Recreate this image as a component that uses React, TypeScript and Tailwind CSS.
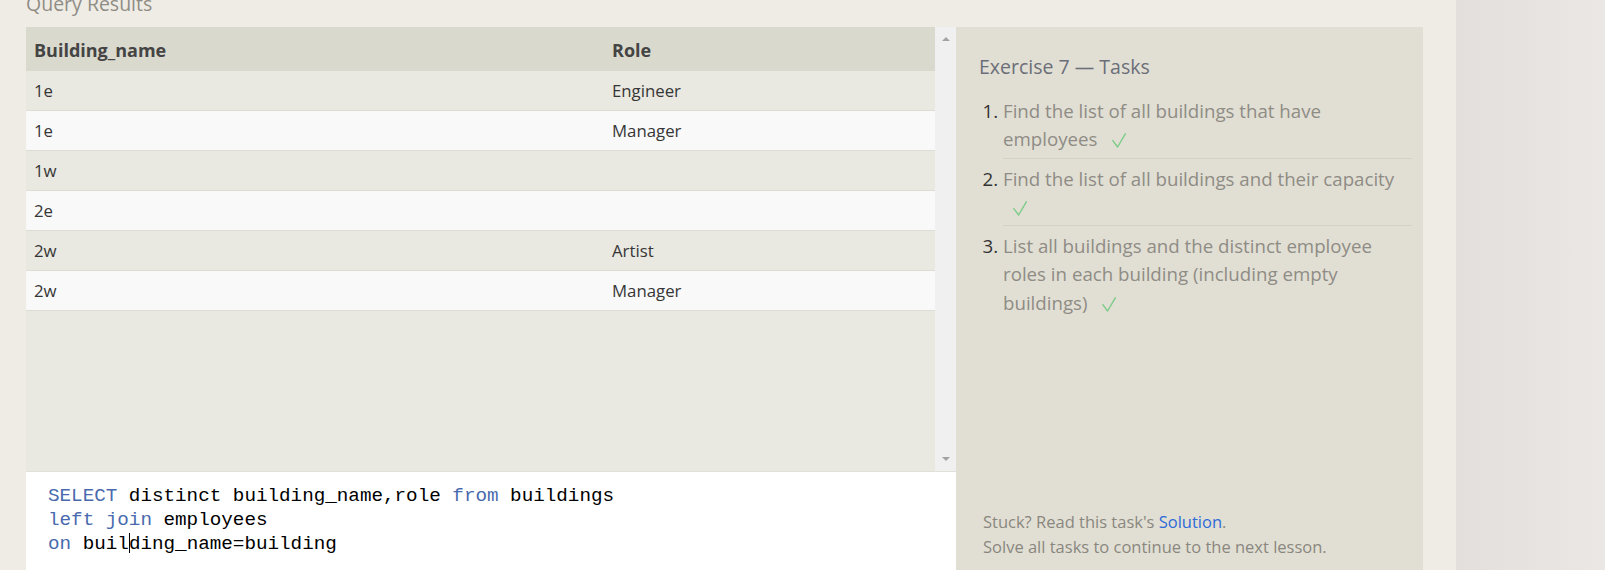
const rows = [
  { building: '1e', role: 'Engineer' },
  { building: '1e', role: 'Manager' },
  { building: '1w', role: '' },
  { building: '2e', role: '' },
  { building: '2w', role: 'Artist' },
  { building: '2w', role: 'Manager' },
];

const tasks = [
  'Find the list of all buildings that have employees',
  'Find the list of all buildings and their capacity',
  'List all buildings and the distinct employee roles in each building (including empty buildings)',
];

function Check() {
  return (
    <svg
      width="14"
      height="15"
      viewBox="0 0 14 15"
      className="inline-block align-[-2px] ml-[10px]"
      fill="none"
      stroke="#7ccb88"
      strokeWidth="1.4"
      strokeLinecap="round"
      strokeLinejoin="round"
    >
      <path d="M0.8 7.6 L5.6 14 L13.3 0.8" />
    </svg>
  );
}

export default function App() {
  return (
    <div className="flex h-[570px] w-full overflow-hidden bg-[#efece5] font-['Open_Sans',sans-serif]">
      {/* Lesson column */}
      <div className="w-[1456px] shrink-0 pl-[26px] pr-[33px]">
        <h2 className="-mt-[10px] mb-[10px] text-[19.5px] leading-[27px] text-[#8f8c85]">Query Results</h2>

        <div className="flex h-[543px]">
          {/* Results + editor */}
          <div className="flex w-[930px] flex-col">
            <div className="flex h-[444px]">
              <div className="w-[909px] bg-[#e9e8e1]">
                <div className="grid h-[44px] grid-cols-[578px_1fr] items-center bg-[#dad9ce] pt-[3px] text-[18px] font-bold text-[#444]">
                  <div className="px-[8px]">Building_name</div>
                  <div className="px-[8px]">Role</div>
                </div>
                {rows.map((r, i) => (
                  <div
                    key={i}
                    className={`grid h-[40px] grid-cols-[578px_1fr] items-center border-b border-[#dddcd5] pt-px text-[16.8px] text-[#363636] ${
                      i % 2 === 0 ? 'bg-[#e9e8e1]' : 'bg-[#f9f9f9]'
                    }`}
                  >
                    <div className="px-[8px]">{r.building}</div>
                    <div className="px-[8px]">{r.role}</div>
                  </div>
                ))}
              </div>
              {/* scrollbar */}
              <div className="flex w-[21px] flex-col items-center justify-between bg-[#f0f0f0] pt-[10px] pb-[10px]">
                <span className="h-0 w-0 border-x-[4px] border-b-[4px] border-x-transparent border-b-[#a3a3a3]" />
                <span className="h-0 w-0 border-x-[4px] border-t-[4px] border-x-transparent border-t-[#a3a3a3]" />
              </div>
            </div>

            <div className="flex-1 border-t border-[#e2e0da] bg-white pl-[22px] pt-[12px] font-['Liberation_Mono',monospace] text-[19.25px] leading-[24px] text-black">
              <div>
                <span className="text-[#4a6aae]">SELECT</span> distinct building_name,role{' '}
                <span className="text-[#4a6aae]">from</span> buildings
              </div>
              <div>
                <span className="text-[#4a6aae]">left join</span> employees
              </div>
              <div>
                <span className="text-[#4a6aae]">on</span> buil
                <span className="-mr-px inline-block h-[20px] w-0 border-l border-black align-[-4px]" />
                ding_name=building
              </div>
            </div>
          </div>

          {/* Tasks panel */}
          <div className="flex w-[467px] flex-col justify-between bg-[#e1dfd4]">
            <div className="pt-[26px] pl-[23px] pr-[11px]">
              <h3 className="text-[19.5px] leading-[27px] text-[#6b6e78]">Exercise 7 — Tasks</h3>
              <ol className="mt-[17px] list-decimal pl-[24px] text-[18.7px] leading-[28.3px] text-[#8f8c85] marker:text-[#333]">
                {tasks.map((t) => (
                  <li
                    key={t}
                    className="border-b border-[#d4d2c7] pt-[6px] pb-[4px] first:pt-0 last:border-b-0"
                  >
                    {t} <Check />
                  </li>
                ))}
              </ol>
            </div>
            <div className="pl-[27px] pb-[11px] text-[16.5px] leading-[25px] text-[#8a877f]">
              <p>
                Stuck? Read this task's <a className="text-[#2f6bd8]">Solution</a>.
              </p>
              <p>Solve all tasks to continue to the next lesson.</p>
            </div>
          </div>
        </div>
      </div>

      {/* Right strip */}
      <div className="flex-1 bg-linear-to-r from-[#e3dfdc] to-[#ebe7e4]" />
    </div>
  );
}
